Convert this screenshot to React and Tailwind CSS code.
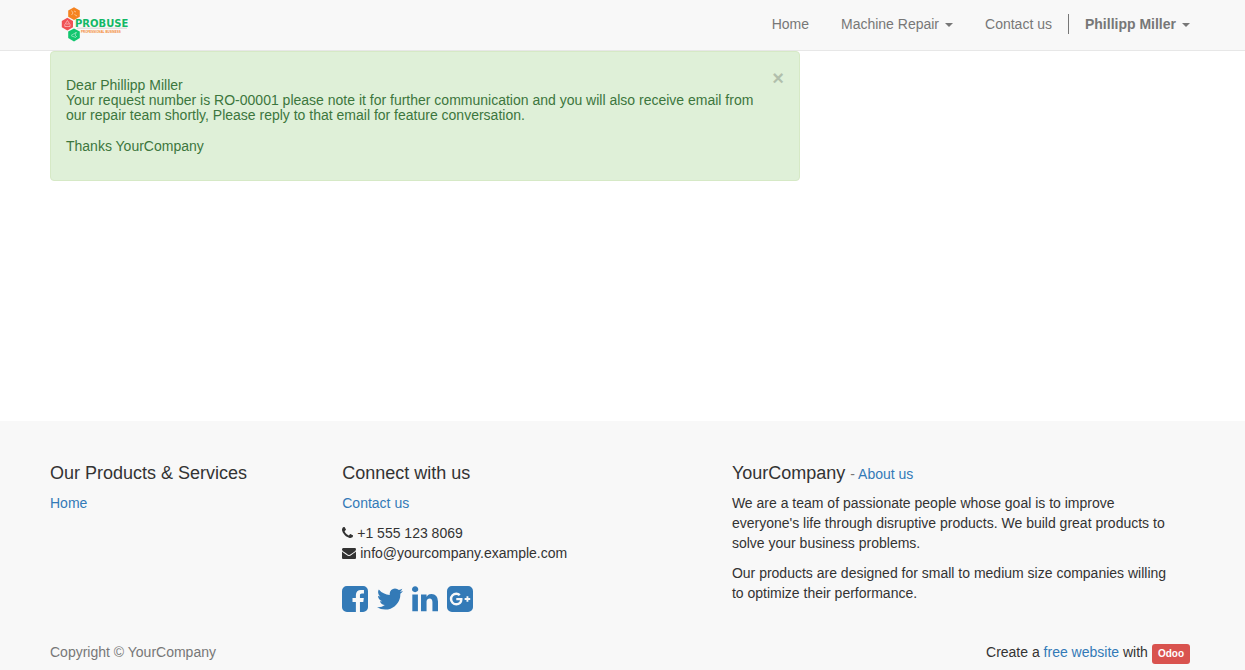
import React from "react";

const ICONS = {
  phone: {
    box: "192 128 1408 1536",
    d: "M1600 1240q0 27-10 70.5t-21 68.5q-21 50-122 106-94 51-186 51-27 0-53-3.5t-57.5-12.5-47-14.5-55.5-20.5-49-18q-98-35-175-83-127-79-264-216t-216-264q-48-77-83-175-3-9-18-49t-20.5-55.5-14.5-47-12.5-57.5-3.5-53q0-92 51-186 56-101 106-122 25-11 68.5-21t70.5-10q14 0 21 3 18 6 53 76 11 19 30 54t35 63.5 31 53.5q3 4 17.5 25t21.5 35.5 7 28.5q0 20-28.5 50t-62 55-62 53-28.5 46q0 9 5 22.5t8.5 20.5 14 24 11.5 19q76 137 174 235t235 174q2 1 19 11.5t24 14 20.5 8.5 22.5 5q18 0 46-28.5t53-62 55-62 50-28.5q14 0 28.5 7t35.5 21.5 25 17.5q25 15 53.5 31t63.5 35 54 30q70 35 76 53 3 7 3 21z",
  },
  envelope: {
    box: "0 128 1792 1536",
    d: "M1792 710v794q0 66-47 113t-113 47h-1472q-66 0-113-47t-47-113v-794q44 49 101 87 362 246 497 345 57 42 92.5 65.5t94.5 48 110 24.5h2q51 0 110-24.5t94.5-48 92.5-65.5q170-123 498-345 57-39 100-87zm0-294q0 79-49 151t-122 123q-376 261-468 325-10 7-42.5 31t-54 38.5-52 32.5-57.5 27-50 9h-2q-23 0-50-9t-57.5-27-52-32.5-54-38.5-42.5-31q-91-64-262-182.5t-205-142.5q-62-42-117-115.5t-55-136.5q0-78 41.5-130t118.5-52h1472q65 0 112.5 47t47.5 113z",
  },
  facebook: {
    box: "128 128 1536 1536",
    d: "M1376 128q119 0 203.5 84.5t84.5 203.5v960q0 119-84.5 203.5t-203.5 84.5h-188v-595h199l30-232h-229v-148q0-56 23.5-84t91.5-28l122-1v-207q-63-9-178-9-136 0-217.5 80t-81.5 226v171h-200v232h200v595h-532q-119 0-203.5-84.5t-84.5-203.5v-960q0-119 84.5-203.5t203.5-84.5h960z",
  },
  twitter: {
    box: "108 128 1576 1536",
    d: "M1684 408q-67 98-162 167 1 14 1 42 0 130-38 259.5t-115.5 248.5-184.5 210.5-258 146-323 54.5q-271 0-496-145 35 4 78 4 225 0 401-138-105-2-188-64.5t-114-159.5q33 5 61 5 43 0 85-11-112-23-185.5-111.5t-73.5-205.5v-4q68 38 146 41-66-44-105-115t-39-154q0-88 44-163 121 149 294.5 238.5t371.5 99.5q-8-38-8-74 0-134 94.5-228.5t228.5-94.5q140 0 236 102 109-21 205-78-37 115-142 178 93-10 186-50z",
  },
  linkedin: {
    box: "128 128 1536 1536",
    d: "M477 625v991h-330v-991h330zm21-306q1 73-50.5 122t-135.5 49h-2q-82 0-132-49t-50-122q0-74 51.5-122.5t134.5-48.5 133 48.5 51 122.5zm1166 729v568h-329v-530q0-105-40.5-164.5t-126.5-59.5q-63 0-105.5 34.5t-63.5 85.5q-11 30-11 81v553h-329q2-399 2-647t-1-296l-1-48h329v144h-2q20-32 41-56t56.5-52 87-43.5 114.5-15.5q171 0 275 113.5t104 332.5z",
  },
  google: {
    box: "128 128 1536 1536",
    d: "M1045 905q0-26-6-64h-362v132h217q-3 24-16.5 50t-37.5 53-66.5 44.5-96.5 17.5q-99 0-169-71t-70-171 70-171 169-71q92 0 153 59l104-101q-108-100-257-100-160 0-272 112.5t-112 271.5 112 271.5 272 112.5q165 0 266.5-105t101.5-270zm345 46h109v-110h-109v-110h-110v110h-110v110h110v110h110v-110zm274-535v960q0 119-84.5 203.5t-203.5 84.5h-960q-119 0-203.5-84.5t-84.5-203.5v-960q0-119 84.5-203.5t203.5-84.5h960q119 0 203.5 84.5t84.5 203.5z",
  },
};

const SOCIAL = [
  ["facebook", "Facebook"],
  ["twitter", "Twitter"],
  ["linkedin", "LinkedIn"],
  ["google", "Google Plus"],
];

function Icon({ name, className }) {
  return (
    <svg viewBox={ICONS[name].box} fill="currentColor" aria-hidden="true" className={className}>
      <path d={ICONS[name].d} />
    </svg>
  );
}

function Container({ className = "", children }) {
  return (
    <div className="pr-[5px]">
      <div className={`mx-auto w-full max-w-[1170px] px-[15px] ${className}`}>{children}</div>
    </div>
  );
}

function Caret() {
  return (
    <span className="ml-1.5 inline-block border-x-4 border-t-4 border-x-transparent border-t-current align-middle" />
  );
}

function Logo() {
  return (
    <svg width="70" height="38" viewBox="0 0 70 38" aria-hidden="true">
      <path d="M14 1.2l5.8 3.2v6.4L14 14l-5.800-3.200V4.400z" fill="#f5831f" />
      <path d="M7.400 11.800l5.600 3.200v6.200l-5.600 3.200-5.600-3.200V15z" fill="#f05155" />
      <path d="M14 22.400l5.800 3.200V32L14 35.400 8.200 32v-6.400z" fill="#12c66f" />
      <g fill="none" stroke="#fff" strokeOpacity="0.6" strokeWidth="0.8">
        <path d="M11.500 4.500l1.500 2.500-1.500 2M14.500 8.500l2.500 1.500M14 5l2 1" />
        <path d="M4.800 20.500v-2l2.600-4 2.600 4v2zM6 18h3" />
        <path d="M11 29.500l5-3M11.500 30l4.500 1.500M16.500 26l-1.500 3 2 2" />
      </g>
      <text x="15" y="20.500" fontSize="10" fontWeight="700" fontFamily="'DejaVu Sans', sans-serif" fill="#12b866">
        PROBUSE
      </text>
      <path d="M17 22.200h50" stroke="#c9c9c9" strokeWidth="0.7" />
      <text x="21" y="26.800" fontSize="3" fontWeight="700" fontFamily="'Liberation Sans', sans-serif" fill="#f58a35">
        PROFESSIONAL BUSINESS
      </text>
    </svg>
  );
}

export default function App() {
  return (
    <div className="flex min-h-screen flex-col bg-white font-['Liberation_Sans',Arial,sans-serif] text-sm leading-5 text-[#333]">
      <header className="border-b border-[#e7e7e7] bg-[#f8f8f8]">
        <Container className="flex h-[50px] items-center justify-between">
          <a href="#home" aria-label="Probuse" className="pl-2.5">
            <Logo />
          </a>
          <nav className="flex items-center pb-0.5 whitespace-nowrap text-[#777]">
            <a href="#home" className="px-4">Home</a>
            <button type="button" className="px-4">
              Machine Repair
              <Caret />
            </button>
            <a href="#contact" className="px-4">Contact us</a>
            <button type="button" className="border-l border-[#777] pl-4 font-bold">
              Phillipp Miller
              <Caret />
            </button>
          </nav>
        </Container>
      </header>

      <main className="flex-1">
        <Container>
          <div
            role="alert"
            className="max-w-[750px] rounded border border-[#d6e9c6] bg-[#dff0d8] px-[15px] py-[26px] leading-[15px] text-[#3c763d]"
          >
            <button
              type="button"
              aria-label="Close"
              className="float-right -mt-1.5 h-3 text-xl leading-3 font-bold text-black opacity-20"
            >
              ×
            </button>
            <div className="pr-3">
              <p>Dear Phillipp Miller</p>
              <p>
                Your request number is RO-00001 please note it for further communication and you will also receive
                email from our repair team shortly, Please reply to that email for feature conversation.
              </p>
              <p className="mt-4">Thanks YourCompany</p>
            </div>
          </div>
        </Container>
      </main>

      <footer className="bg-[#f8f8f8] pt-[42px] pb-1.5">
        <Container>
          <div className="grid grid-cols-12 gap-x-[29px]">
            <section className="col-span-3">
              <h2 className="mb-2.5 text-lg leading-5">Our Products &amp; Services</h2>
              <a href="#home" className="text-[#337ab7]">Home</a>
            </section>
            <section className="col-span-4">
              <h2 className="mb-2.5 text-lg leading-5">Connect with us</h2>
              <a href="#contact" className="text-[#337ab7]">Contact us</a>
              <div className="mt-2.5 flex items-center gap-1">
                <Icon name="phone" className="h-3 w-[11px]" />
                <span>+1 555 123 8069</span>
              </div>
              <div className="flex items-center gap-1">
                <Icon name="envelope" className="h-3 w-3.5" />
                <span>info@yourcompany.example.com</span>
              </div>
              <div className="mt-[23px] flex gap-[9px] text-[#337ab7]">
                {SOCIAL.map(([name, label]) => (
                  <a key={name} href={`#${name}`} aria-label={label}>
                    <Icon name={name} className="size-[26px]" />
                  </a>
                ))}
              </div>
            </section>
            <section className="col-span-5 pr-3">
              <h2 className="mb-2.5 text-lg leading-5">
                YourCompany{" "}
                <span className="text-sm leading-none text-[#777]">
                  - <a href="#about" className="text-[#337ab7]">About us</a>
                </span>
              </h2>
              <p>
                We are a team of passionate people whose goal is to improve everyone's life through disruptive products.
                We build great products to solve your business problems.
              </p>
              <p className="mt-2.5">
                Our products are designed for small to medium size companies willing to optimize their performance.
              </p>
            </section>
          </div>
          <div className="mt-[30px] flex items-start justify-between">
            <p className="text-[#777]">Copyright © YourCompany</p>
            <p className="flex gap-1">
              <span>
                Create a <a href="#website" className="text-[#337ab7]">free website</a> with
              </span>
              <a
                href="#odoo"
                className="mt-0.5 rounded-[3px] bg-[#d9534f] px-1.5 text-[10px] leading-5 font-bold text-white"
              >
                Odoo
              </a>
            </p>
          </div>
        </Container>
      </footer>
    </div>
  );
}
